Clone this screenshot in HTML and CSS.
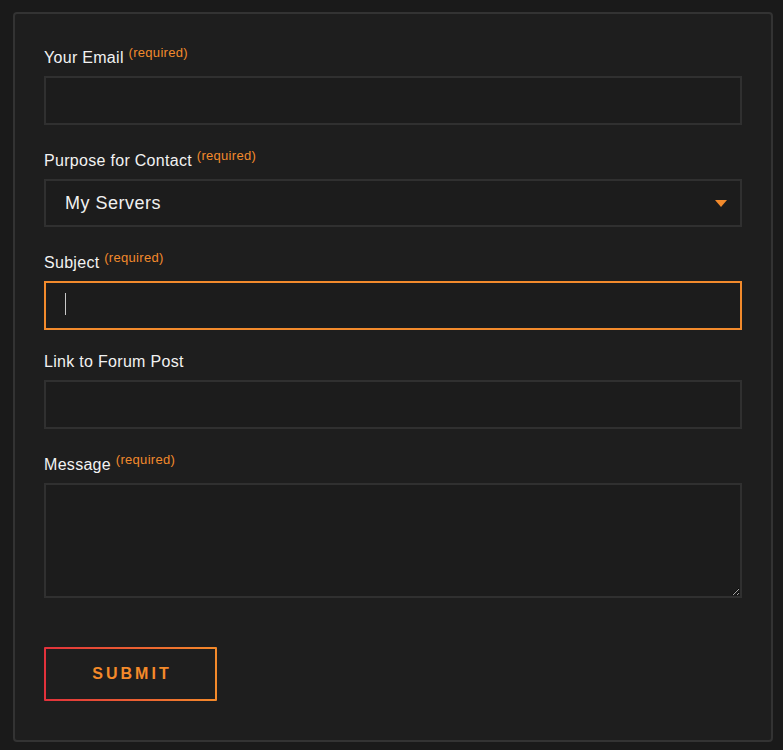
FILE: index.html
```html
<!DOCTYPE html>
<html lang="en">
<head>
  <meta charset="UTF-8">
  <title>Contact</title>
  <link rel="stylesheet" href="styles.css">
</head>
<body>
  <form class="panel">
    <div class="field">
      <label for="email" class="has-req">Your Email <sup class="req">(required)</sup></label>
      <input type="email" id="email" class="input">
    </div>
    <div class="field">
      <label for="purpose" class="has-req">Purpose for Contact <sup class="req">(required)</sup></label>
      <div class="select-wrap">
        <select id="purpose" class="input select">
          <option>My Servers</option>
          <option>Billing</option>
          <option>Other</option>
        </select>
      </div>
    </div>
    <div class="field">
      <label for="subject" class="has-req">Subject <sup class="req">(required)</sup></label>
      <div class="caret-wrap">
        <input type="text" id="subject" class="input focused">
      </div>
    </div>
    <div class="field">
      <label for="link">Link to Forum Post</label>
      <input type="text" id="link" class="input">
    </div>
    <div class="field">
      <label for="message" class="has-req">Message <sup class="req">(required)</sup></label>
      <textarea id="message" class="input textarea"></textarea>
    </div>
    <button type="button" class="submit"><span>SUBMIT</span></button>
  </form>
</body>
</html>
```

FILE: styles.css
```css
body {
  margin: 0;
  background-color: #1a1a1a;
  font-family: "Liberation Sans", Arial, sans-serif;
  color: #f0f0f0;
}
.panel {
  margin: 12px 10px 8px 13px;
  padding: 29px 29px 39px 29px;
  background-color: #1e1e1e;
  border: 2px solid #333;
  border-radius: 4px;
}
.field {
  margin-bottom: 21px;
}
.field label {
  display: block;
  font-size: 16px;
  line-height: 22px;
  letter-spacing: 0.3px;
  margin-bottom: 7px;
  color: #f2f2f2;
}
.field label.has-req {
  padding-top: 4px;
}
.req {
  font-size: 13px;
  letter-spacing: 0.3px;
  color: #f28a2c;
  vertical-align: 6px;
  line-height: 0;
}
.input {
  display: block;
  box-sizing: border-box;
  width: 100%;
  height: 49px;
  margin: 0;
  padding: 0 19px;
  background-color: #1c1c1c;
  border: 2px solid #303030;
  border-radius: 0;
  color: #f0f0f0;
  font-family: "Liberation Sans", Arial, sans-serif;
  font-size: 18px;
  letter-spacing: 0.5px;
  outline: none;
}
.input.focused,
.input:focus {
  border-color: #f28a2c;
}
.select-wrap,
.caret-wrap {
  position: relative;
}
.select {
  -webkit-appearance: none;
  appearance: none;
  height: 48px;
}
.select-wrap::after {
  content: "";
  position: absolute;
  right: 15px;
  top: 21px;
  border-left: 6px solid transparent;
  border-right: 6px solid transparent;
  border-top: 7px solid #f28a2c;
  pointer-events: none;
}
/* text cursor shown in the focused field */
.caret-wrap::after {
  content: "";
  position: absolute;
  left: 21px;
  top: 12px;
  width: 1px;
  height: 22px;
  background-color: #c8c8c8;
  pointer-events: none;
}
.textarea {
  height: 115px;
  padding: 12px 19px;
  resize: vertical;
}
.submit {
  display: block;
  margin-top: 49px;
  width: 173px;
  height: 54px;
  padding: 2px;
  border: none;
  border-radius: 1px;
  background: linear-gradient(90deg, #e2313b, #f48a2a);
  cursor: pointer;
}
.submit span {
  display: flex;
  align-items: center;
  justify-content: center;
  height: 100%;
  background-color: #1e1e1e;
  color: #f48a2a;
  font-family: "Liberation Sans", Arial, sans-serif;
  font-weight: bold;
  font-size: 16px;
  letter-spacing: 3px;
  padding-left: 3px;
}
```
